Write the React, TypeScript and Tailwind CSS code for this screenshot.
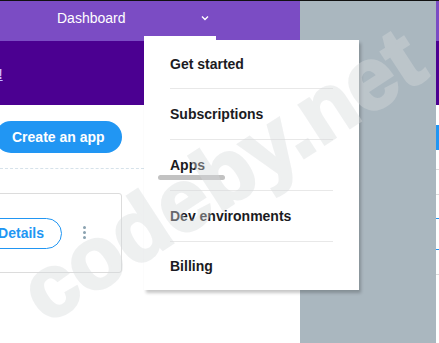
import React from "react";

const menuItems = ["Get started", "Subscriptions", "Apps", "Dev environments", "Billing"];

export default function App() {
  return (
    <div
      className="relative w-[439px] h-[343px] overflow-hidden bg-white border-t border-[#111]"
      style={{ fontFamily: '"Liberation Sans", Arial, sans-serif' }}
    >
      <div className="flex h-full">
        {/* Left page area */}
        <div className="w-[300px] flex flex-col">
          <div className="h-[40px] bg-[#7b4cc4] flex items-center pb-[6px]">
            <span className="ml-[57px] text-[14px] text-white">Dashboard</span>
            <svg className="ml-[75px]" width="8" height="6" viewBox="0 0 8 6">
              <path d="M1 1.5 L4 4.5 L7 1.5" stroke="#fff" strokeWidth="1.4" fill="none" />
            </svg>
          </div>
          <div className="h-[64px] bg-[#4b0091] flex items-center">
            <span className="text-[14px] font-bold text-[#c8b8ff] underline -ml-[2px] pt-[2px]">!</span>
          </div>
          <div className="flex flex-col pt-[16px]">
            <div className="-ml-[5px] h-[32px] w-[127px] rounded-full bg-[#2196f3] flex items-center pl-[17px]">
              <span className="text-[14px] font-bold text-white">Create an app</span>
            </div>
            <div className="mt-[15px] border-t border-dashed border-[#d6e2ea]" />
            <div className="mt-[24px] -ml-[10px] w-[132px] h-[80px] border border-[#dcdcdc] rounded-[3px] flex items-center">
              <div className="ml-[-8px] h-[31px] w-[79px] rounded-full border border-[#2196f3] flex items-center justify-end pr-[17px]">
                <span className="text-[14px] font-bold text-[#2196f3]">Details</span>
              </div>
              <div className="ml-[21px] flex flex-col gap-[2px] pb-[2px]">
                <span className="w-[3px] h-[3px] rounded-full bg-[#8aa2b0]" />
                <span className="w-[3px] h-[3px] rounded-full bg-[#8aa2b0]" />
                <span className="w-[3px] h-[3px] rounded-full bg-[#8aa2b0]" />
              </div>
            </div>
          </div>
        </div>
        {/* Gray backdrop panel */}
        <div className="w-[136px] h-full bg-[#aab7bf]" />
        {/* Right strip */}
        <div className="w-[3px] flex flex-col">
          <div className="h-[40px] bg-[#7b4cc4]" />
          <div className="h-[64px] bg-[#4b0091]" />
          <div className="h-[20px]" />
          <div className="h-[25px] bg-[#2196f3]" />
          <div className="h-[19px]" />
          <div className="h-px bg-[#dcdcdc]" />
          <div className="h-[24px]" />
          <div className="h-px bg-[#dcdcdc]" />
          <div className="h-[23px]" />
          <div className="h-px bg-[#2196f3]" />
          <div className="h-[30px]" />
          <div className="h-px bg-[#2196f3]" />
          <div className="h-[24px]" />
          <div className="h-px bg-[#dcdcdc]" />
        </div>
      </div>

      {/* Dropdown menu */}
      <div className="absolute left-[144px] top-[35px] w-[215px] flex flex-col">
        <div className="h-[5px] w-[72px] bg-white" />
        <div className="bg-white h-[250px] shadow-[2px_3px_3px_rgba(0,0,0,0.22)] flex flex-col pl-[26px] pr-[26px] -mt-px">
          {menuItems.map((item, i) => (
            <div
              key={item}
              className={
                "relative flex items-center " +
                (i === 0
                  ? "h-[49px] border-b border-[#e8e8e8]"
                  : i < menuItems.length - 1
                  ? "h-[51px] border-b border-[#e8e8e8]"
                  : "h-[48px]")
              }
            >
              <span className="text-[14px] font-bold text-[#1b1b22]">{item}</span>
              {item === "Apps" && (
                <span className="absolute left-[-12px] top-[35px] w-[67px] h-[5px] rounded-full bg-[#c2c2c2] blur-[0.5px]" />
              )}
            </div>
          ))}
        </div>
      </div>

      {/* Watermark */}
      <div
        className="absolute left-[222px] top-[174px] pointer-events-none whitespace-nowrap text-[88px] font-bold leading-none text-[#d7dadc] opacity-40 [-webkit-text-stroke:3px_#d7dadc]"
        style={{ transform: "translate(-50%, -50%) rotate(-33deg)", fontFamily: '"Liberation Sans", Arial, sans-serif' }}
      >
        codeby.net
      </div>
    </div>
  );
}
